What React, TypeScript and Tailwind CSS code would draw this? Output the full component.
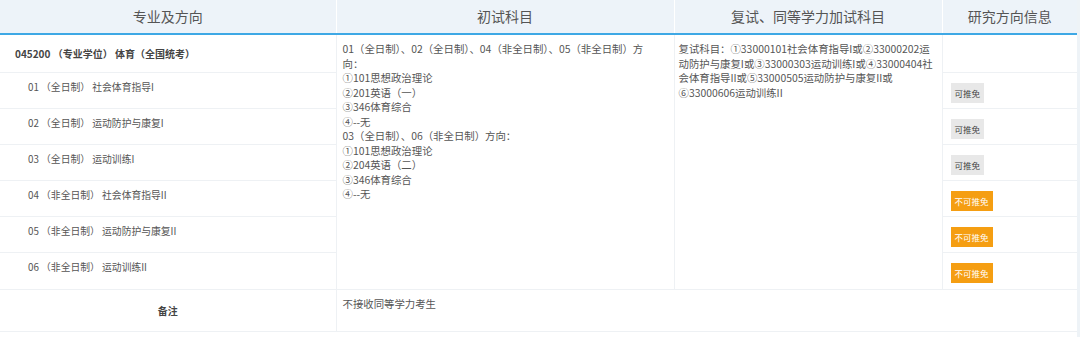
import React from "react";

const rows = [
  { name: "01 （全日制） 社会体育指导I", ok: true },
  { name: "02 （全日制） 运动防护与康复I", ok: true },
  { name: "03 （全日制） 运动训练I", ok: true },
  { name: "04 （非全日制） 社会体育指导II", ok: false },
  { name: "05 （非全日制） 运动防护与康复II", ok: false },
  { name: "06 （非全日制） 运动训练II", ok: false },
];

const firstExam = [
  "01（全日制）、02（全日制）、04（非全日制）、05（非全日制）方",
  "向：",
  "①101思想政治理论",
  "②201英语（一）",
  "③346体育综合",
  "④--无",
  "03（全日制）、06（非全日制）方向：",
  "①101思想政治理论",
  "②204英语（二）",
  "③346体育综合",
  "④--无",
];

const retest = [
  "复试科目：①33000101社会体育指导I或②33000202运",
  "动防护与康复I或③33000303运动训练I或④33000404社",
  "会体育指导II或⑤33000505运动防护与康复II或",
  "⑥33000606运动训练II",
];

function Badge({ ok }: { ok: boolean }) {
  return ok ? (
    <span className="inline-block bg-[#e8e8e8] px-[4px] py-[3px] text-[8.5px] leading-[14px] text-[#444]">
      可推免
    </span>
  ) : (
    <span className="inline-block bg-[#f59e12] px-[4px] py-[3px] text-[8.5px] leading-[14px] text-white">
      不可推免
    </span>
  );
}

export default function App() {
  return (
    <div
      className="flex h-[337px] w-[1080px] overflow-hidden bg-white text-[#555]"
      style={{ fontFamily: '"Noto Sans CJK SC", "Noto Sans", sans-serif' }}
    >
      <div className="w-[1077px]">
        <table className="w-[1077px] table-fixed border-collapse bg-white">
          <colgroup>
            <col className="w-[336px]" />
            <col className="w-[338px]" />
            <col className="w-[268px]" />
            <col className="w-[135px]" />
          </colgroup>
          <thead>
            <tr className="h-[34px] border-b-2 border-[#3ea8e5] bg-[#edf3f9] text-[14px] font-normal text-[#555]">
              <th className="border-r border-white font-normal">专业及方向</th>
              <th className="border-r border-white font-normal">初试科目</th>
              <th className="border-r border-white font-normal">复试、同等学力加试科目</th>
              <th className="font-normal">研究方向信息</th>
            </tr>
          </thead>
          <tbody>
            <tr className="h-[38px]">
              <td className="border-b border-r border-[#eef1f4] pl-[15px] text-[10px] font-bold text-[#444]">
                045200 （专业学位） 体育（全国统考）
              </td>
              <td
                rowSpan={7}
                className="border-r border-[#eef1f4] px-[6px] pt-[7px] align-top text-[10.4px] leading-[14.5px]"
              >
                {firstExam.map((l) => (
                  <div key={l} className="whitespace-nowrap">
                    {l}
                  </div>
                ))}
              </td>
              <td
                rowSpan={7}
                className="border-r border-[#eef1f4] px-[4px] pt-[7px] align-top text-[10.4px] leading-[14.5px]"
              >
                {retest.map((l) => (
                  <div key={l} className="whitespace-nowrap">
                    {l}
                  </div>
                ))}
              </td>
              <td className="border-b border-[#eef1f4]" />
            </tr>
            {rows.map((r, i) => (
              <tr key={r.name} className={i === 5 ? "h-[37px]" : "h-[36px]"}>
                <td className="border-b border-r border-[#eef1f4] pl-[28px] pt-[7px] align-top text-[9.8px] leading-[14px]">
                  {r.name}
                </td>
                <td className="border-b border-[#eef1f4] pl-[8px] align-middle">
                  <Badge ok={r.ok} />
                </td>
              </tr>
            ))}
            <tr className="h-[42px] border-t border-b border-[#eef1f4]">
              <td className="border-r border-[#eef1f4] text-center text-[10px] font-bold text-[#444]">备注</td>
              <td colSpan={3} className="px-[6px] pt-[7px] align-top text-[10.4px] leading-[14.5px]">
                不接收同等学力考生
              </td>
            </tr>
          </tbody>
        </table>
      </div>
      <div className="flex-1 bg-[#eef3f7]" />
    </div>
  );
}
